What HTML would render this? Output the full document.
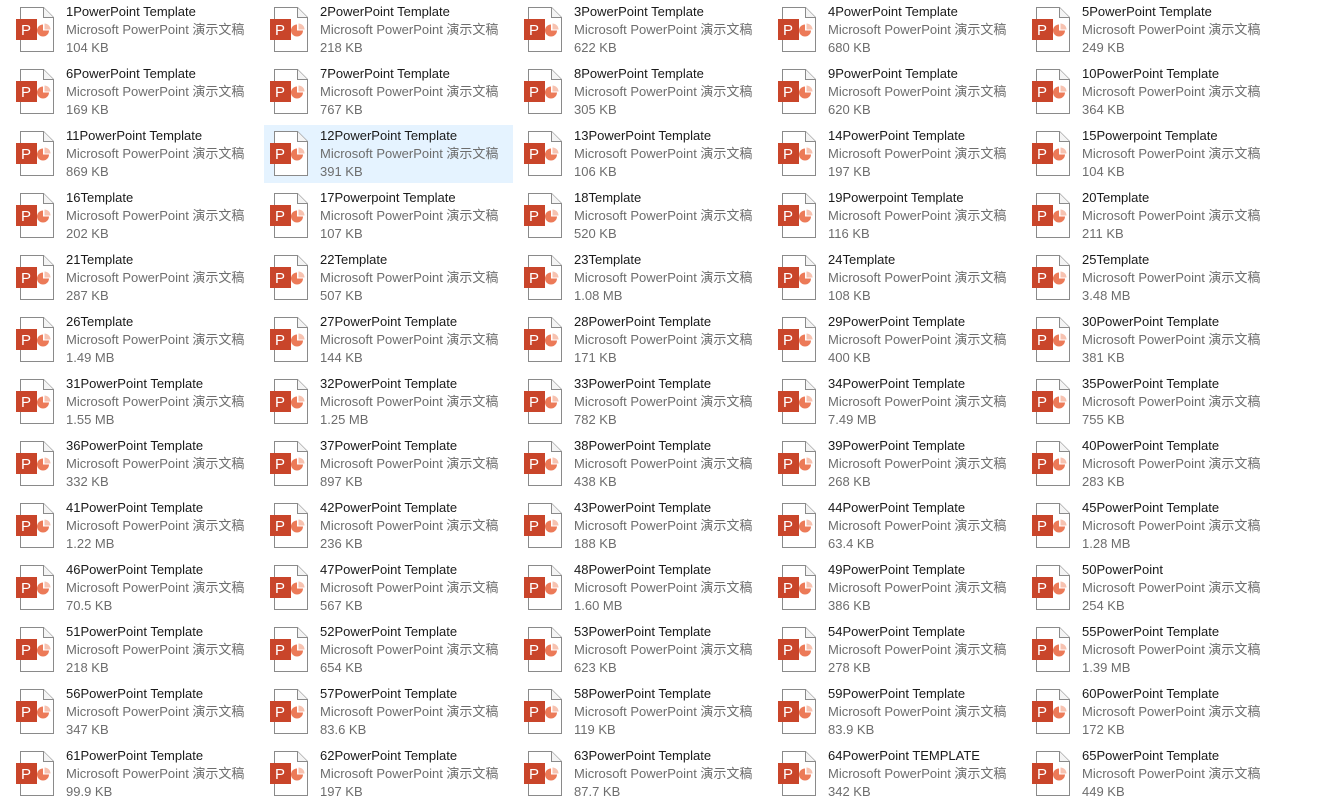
<!DOCTYPE html><html><head><meta charset="utf-8"><style>
body{margin:0;width:1337px;height:788px;background:#fff;overflow:hidden;position:relative;font-family:"Liberation Sans","Noto Sans CJK SC",sans-serif;font-size:13px}
.c{position:absolute;width:249px;height:58px}
.c.s{background:#e5f3ff}
.c svg{position:absolute;left:0;top:0}
.t{position:absolute;left:56px;top:2px;line-height:18px;white-space:nowrap}
.t div:first-child{color:#1a1a1a}
.t div{color:#6d6d6d}
</style></head><body><div id="g"></div>
<script>
var sizes=["104 KB","218 KB","622 KB","680 KB","249 KB","169 KB","767 KB","305 KB","620 KB","364 KB","869 KB","391 KB","106 KB","197 KB","104 KB","202 KB","107 KB","520 KB","116 KB","211 KB","287 KB","507 KB","1.08 MB","108 KB","3.48 MB","1.49 MB","144 KB","171 KB","400 KB","381 KB","1.55 MB","1.25 MB","782 KB","7.49 MB","755 KB","332 KB","897 KB","438 KB","268 KB","283 KB","1.22 MB","236 KB","188 KB","63.4 KB","1.28 MB","70.5 KB","567 KB","1.60 MB","386 KB","254 KB","218 KB","654 KB","623 KB","278 KB","1.39 MB","347 KB","83.6 KB","119 KB","83.9 KB","172 KB","99.9 KB","197 KB","87.7 KB","342 KB","449 KB"];
var names={15:"15Powerpoint Template",16:"16Template",17:"17Powerpoint Template",18:"18Template",19:"19Powerpoint Template",20:"20Template",21:"21Template",22:"22Template",23:"23Template",24:"24Template",25:"25Template",26:"26Template",50:"50PowerPoint",64:"64PowerPoint TEMPLATE"};
var icon='<svg width="56" height="58"><path d="M10.5 6.5H33.5L43.5 16.5V50.5H10.5Z" fill="#fff" stroke="#8a8a8a"/><path d="M33.5 6.5V16.5H43.5" fill="#f4f4f4" stroke="#8a8a8a"/><rect x="6" y="18" width="21" height="21" fill="#c9452a"/><text x="11" y="34" fill="#fff" font-family="Liberation Sans" font-size="15">P</text><path d="M34.5 28.5V22.5A6 6 0 0 1 40.5 28.5Z" fill="#f7c2b0"/><path d="M33 23.5A6 6 0 1 0 39 29.5H33Z" fill="#ec7a58"/></svg>';
var h='';
for(var i=1;i<=65;i++){var r=Math.floor((i-1)/5),col=(i-1)%5;
h+='<div class="c'+(i==12?' s':'')+'" style="left:'+(10+col*254)+'px;top:'+(1+r*62)+'px">'+icon+'<div class="t"><div>'+(names[i]||i+'PowerPoint Template')+'</div><div>Microsoft PowerPoint 演示文稿</div><div>'+sizes[i-1]+'</div></div></div>';}
document.getElementById('g').innerHTML=h;
</script></body></html>
